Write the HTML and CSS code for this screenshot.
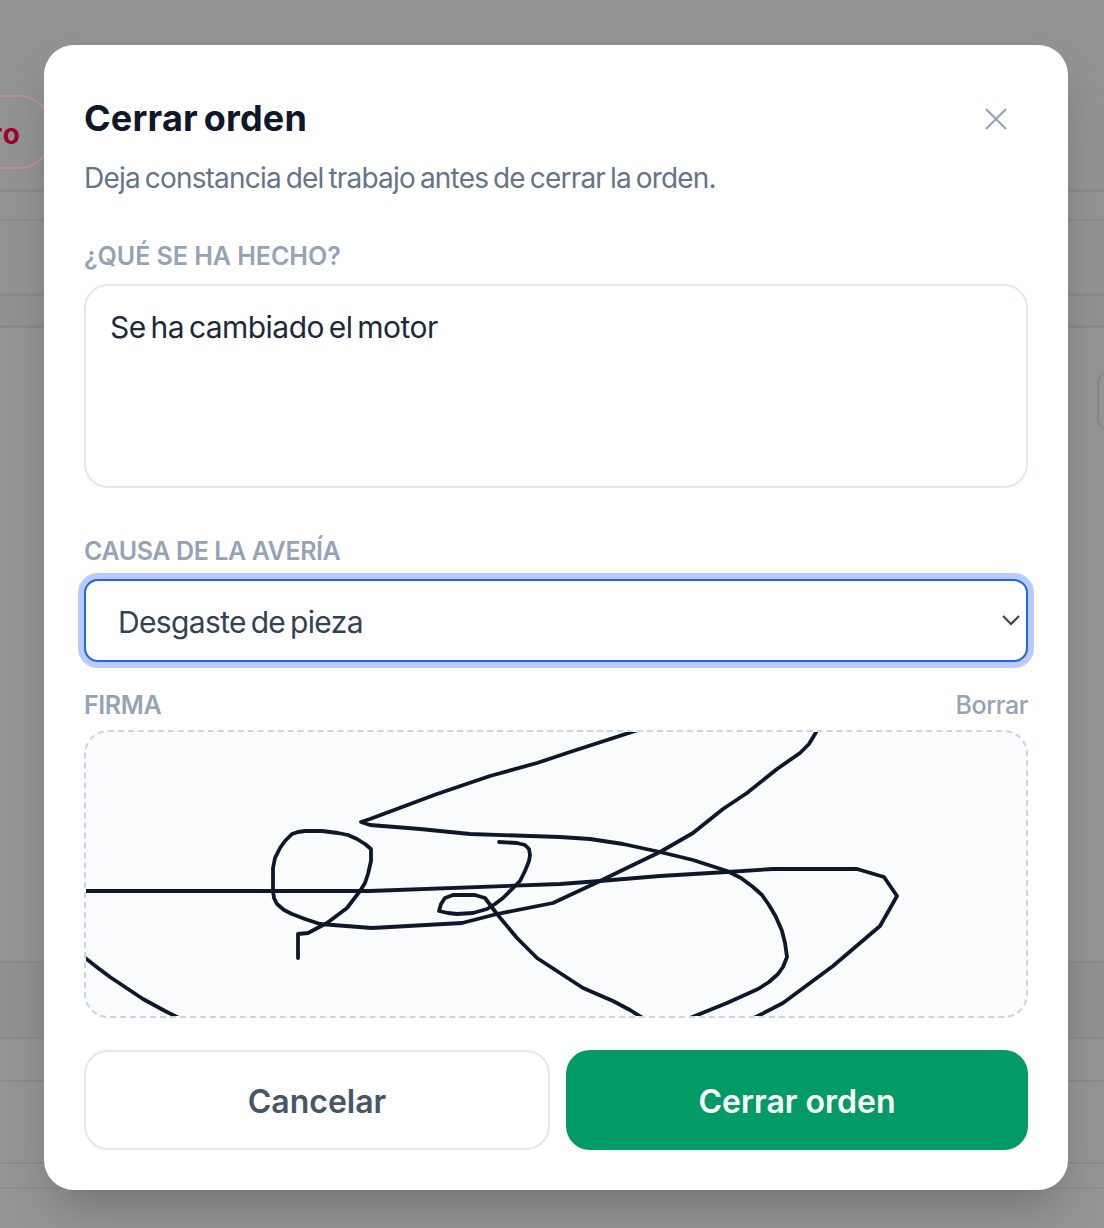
FILE: index.html
```html
<!DOCTYPE html>
<html lang="es">
<head>
<meta charset="utf-8">
<title>Cerrar orden</title>
<link rel="stylesheet" href="styles.css">
</head>
<body>
<main class="page">
  <div class="row row-head"><span class="pill-danger">ro</span></div>
  <div class="row row-a"></div>
  <div class="row row-b"></div>
  <div class="row row-c"></div>
  <div class="row row-body"><span class="pill-ghost"></span></div>
  <div class="row row-d"></div>
  <div class="row row-e"></div>
  <div class="row row-f"></div>
  <div class="row row-g"></div>
</main>
<div class="overlay">
  <section class="modal">
    <header class="modal-head">
      <h1 class="title">Cerrar orden</h1>
      <svg class="close" viewBox="0 0 24 24" width="24" height="24" fill="none" stroke="currentColor" stroke-width="2.2"><path d="M2 2 22 22M22 2 2 22"/></svg>
    </header>
    <p class="subtitle">Deja constancia del trabajo antes de cerrar la orden.</p>
    <label class="label label-work">¿QUÉ SE HA HECHO?</label>
    <textarea class="textarea">Se ha cambiado el motor</textarea>
    <label class="label label-cause">CAUSA DE LA AVERÍA</label>
    <div class="select-wrap">
      <select class="select"><option>Desgaste de pieza</option></select>
      <svg class="chevron" viewBox="0 0 18 12" width="18" height="12" fill="none" stroke="currentColor" stroke-width="2"><path d="M1 2 9 10 17 2"/></svg>
    </div>
    <div class="sign-head">
      <span class="label">FIRMA</span>
      <span class="clear">Borrar</span>
    </div>
    <div class="canvas">
      <svg class="sign" viewBox="86 731 940 284" fill="none" stroke="#0f172a" stroke-width="3.8" stroke-linejoin="round" stroke-linecap="round">
        <path d="M638 729 570 751 537 762 490 775 437 793 370 818 361 821 370 824 420 828 470 833 560 836 590 838 623 843 660 851 693 859 727 870 741 877 753 886 762 894 769 904 776 916 782 930 785 942 787 956 783 966 778 973 769 981 758 988 727 1002 685 1019"/>
        <path d="M298 957V933L308 932 327 922 347 907 360 890 365 882 368 873 371 860 371 848 365 843 357 838 348 834 338 832 322 830 305 830 298 831 292 833 285 840 280 847 275 857 273 867 273 890 274 897 277 903 284 909 292 913 305 918 320 923 372 927 462 922 497 913 553 902 600 880 633 864 660 851 693 832 723 808 747 792 777 768 800 752 809 743 818 728"/>
        <path d="M84 890H360L370 890 560 883 600 880 660 875 727 871 773 868 857 868 884 876 897 895 880 925 833 965 783 1002 750 1019"/>
        <path d="M84 956 98 967 110 976 143 998 165 1010 183 1019"/>
        <path d="M499 841 517 842 525 844 529 848 530 854 529 860 525 870 520 880 503 897 495 903 487 908 473 912 457 913 448 912 439 910 441 903 445 897 453 894 475 894 485 897 497 913 517 937 537 957 560 972 583 987 613 1000 630 1009 646 1019"/>
      </svg>
    </div>
    <div class="actions">
      <button class="btn btn-cancel" type="button">Cancelar</button>
      <button class="btn btn-ok" type="button">Cerrar orden</button>
    </div>
  </section>
</div>
</body>
</html>
```
FILE: styles.css
```css
* { box-sizing: border-box; }
html, body { margin: 0; height: 100%; overflow: hidden; }
body { font-family: Inter, "Liberation Sans", sans-serif; background: #959596; position: relative; }

.page { height: 1228px; display: flex; flex-direction: column; }
.row { flex: none; border-bottom: 2px solid #8a8b8d; }
.row-head { height: 192px; background: #929394; padding-top: 95px; }
.row-a { height: 29px; background: #939495; }
.row-b { height: 75px; background: #929394; }
.row-c { height: 32px; background: #919294; border-bottom: 3px solid #88898f; }
.row-body { height: 635px; background: #959596; padding-top: 43px; display: flex; justify-content: flex-end; }
.row-d { height: 76px; background: #909192; }
.row-e { height: 43px; background: #959596; }
.row-f { height: 82px; background: #959596; }
.row-g { height: 25px; background: #959596; border-bottom: 2px solid #8c8d8e; }

.pill-danger {
  display: block; width: 102px; height: 74px; margin-left: -52px;
  padding-right: 27px; text-align: right;
  border: 2px solid #bd9098; border-radius: 30px;
  font-size: 28px; font-weight: 700; line-height: 74px; color: #a3002e; letter-spacing: 1px;
}
.pill-ghost {
  display: block; width: 40px; height: 60px; margin-right: -33px;
  border: 2px solid #87888a; border-radius: 12px;
}

.overlay { position: absolute; inset: 0; padding: 45px 36px 38px 44px; }
.modal {
  width: 1024px; height: 1145px; padding: 40px;
  background: #fff; border-radius: 30px;
  box-shadow: 0 25px 50px -12px rgba(0, 0, 0, .25);
  display: flex; flex-direction: column;
}
.modal-head { display: flex; justify-content: space-between; align-items: center; height: 66px; }
.title { margin: 0; font-size: 36px; line-height: 66px; font-weight: 700; color: #0f172a; letter-spacing: 0.2px; word-spacing: -3px; }
.close { color: #94a3b8; margin: 2px 20px 0 0; }
.subtitle { margin: 10px 0 0; font-size: 28px; line-height: 34px; color: #64748b; letter-spacing: -0.8px; word-spacing: -2.2px; }

.label { display: block; font-size: 25px; line-height: 32px; font-weight: 600; color: #94a3b8; letter-spacing: -0.4px; }
.label-work { margin-top: 45px; letter-spacing: -0.03px; }
.label-cause { margin-top: 47px; }

.textarea {
  display: block; flex: none; width: 100%; height: 204px; margin-top: 12px;
  padding: 23px 24px; resize: none; outline: none;
  border: 2px solid #e2e8f0; border-radius: 24px; background: #fff;
  font: 400 30px/36px Inter, "Liberation Sans", sans-serif; color: #1e293b; letter-spacing: -0.55px; word-spacing: -3px;
}

.select-wrap { position: relative; height: 83px; margin-top: 12px; flex: none; }
.select {
  appearance: none; display: block; width: 100%; height: 100%;
  padding: 2px 32px 0; background: #fff; outline: none;
  border: 2px solid #2563eb; border-radius: 14px; box-shadow: 0 0 0 6px #b9cbf8;
  font: 400 30px Inter, "Liberation Sans", sans-serif; color: #334155; letter-spacing: -0.65px; word-spacing: -3px;
}
.chevron { position: absolute; right: 8px; top: 35px; color: #334155; }

.sign-head { display: flex; justify-content: space-between; align-items: center; margin-top: 27px; height: 32px; }
.clear { font-size: 25px; font-weight: 500; color: #94a3b8; letter-spacing: -0.4px; }

.canvas {
  flex: none; height: 288px; margin-top: 9px; overflow: hidden;
  background: #fafbfd; border: 2px dashed #cbd5e1; border-radius: 24px;
}
.sign { display: block; width: 940px; height: 284px; }

.actions { display: grid; grid-template-columns: 466px 1fr; gap: 16px; margin-top: 32px; height: 100px; }
.btn { padding-top: 4px; border-radius: 24px; font: 600 32px Inter, "Liberation Sans", sans-serif; }
.btn-cancel { background: #fff; color: #475569; border: 2px solid #e2e8f0; }
.btn-ok { background: #029a65; color: #fff; border: 0; }
```
